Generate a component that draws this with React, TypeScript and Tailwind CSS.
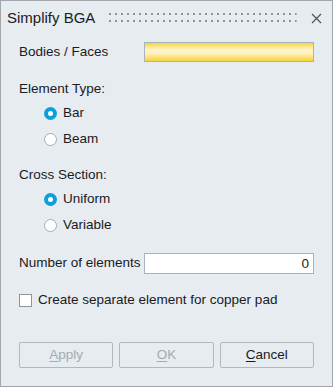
import React from 'react';

function Radio({ label, checked }: { label: string; checked?: boolean }) {
  return (
    <div className="flex items-center h-[26px] pl-[25px]">
      {checked ? (
        <span className="w-[13px] h-[13px] rounded-full bg-[#0aa0e0] flex items-center justify-center">
          <span className="w-[5px] h-[5px] rounded-full bg-white" />
        </span>
      ) : (
        <span className="w-[13px] h-[13px] rounded-full bg-white border border-[#a8acb0]" />
      )}
      <span className="ml-[6px]">{label}</span>
    </div>
  );
}

function Button({ children, disabled }: { children: React.ReactNode; disabled?: boolean }) {
  return (
    <button
      className={
        'flex-1 h-[26px] rounded-[2px] border border-[#b4b8bc] bg-[#e6ecf0] ' +
        (disabled ? 'text-[#a3abb3]' : 'text-[#1a1a24]')
      }
    >
      {children}
    </button>
  );
}

export default function App() {
  return (
    <div
      className="w-[333px] h-[387px] bg-[#e6ecf0] border border-[#a2a6aa] text-[13.5px] text-[#1a1a24] flex flex-col"
      style={{ fontFamily: '"Liberation Sans", Arial, sans-serif' }}
    >
      {/* Title bar */}
      <div className="flex items-center h-[34px] pl-[6px] pr-[8px]">
        <span className="text-[15px]">Simplify BGA</span>
        <svg className="flex-1 mx-[14px] h-[10px]" height="10">
          <defs>
            <pattern id="grip" width="6" height="7" patternUnits="userSpaceOnUse">
              <rect x="0" y="0" width="2" height="2" fill="#8c9298" />
            </pattern>
          </defs>
          <rect x="0" y="0" width="100%" height="9" fill="url(#grip)" />
        </svg>
        <svg width="11" height="11" viewBox="0 0 11 11" className="mr-[2px]">
          <path d="M1 1 L10 10 M10 1 L1 10" stroke="#50565c" strokeWidth="1.3" />
        </svg>
      </div>

      <div className="flex flex-col px-[18px]">
        <div className="flex items-center h-[20px] mt-[7px]">
          <span className="w-[125px]">Bodies / Faces</span>
          <div className="flex-1 h-[20px] border border-[#a9b1bb] bg-[linear-gradient(to_bottom,#f6d53a,#fff3c6_35%,#fff3c6_55%,#f7d23a)]" />
        </div>

        <div className="mt-[16px] h-[22px] flex items-center">Element Type:</div>
        <Radio label="Bar" checked />
        <Radio label="Beam" />

        <div className="mt-[12px] h-[22px] flex items-center">Cross Section:</div>
        <Radio label="Uniform" checked />
        <Radio label="Variable" />

        <div className="flex items-center h-[21px] mt-[15px]">
          <span className="w-[125px]">Number of elements</span>
          <div className="flex-1 h-[21px] border border-[#a9b1bb] bg-white text-right pr-[4px] leading-[19px]">0</div>
        </div>

        <div className="flex items-center mt-[16px] h-[20px]">
          <span className="w-[13px] h-[13px] bg-white border border-[#8e9499]" />
          <span className="ml-[6px]">Create separate element for copper pad</span>
        </div>
      </div>

      <div className="flex-1" />
      <div className="flex gap-[6px] px-[18px] pb-[18px]">
        <Button disabled><span className="underline underline-offset-2">A</span>pply</Button>
        <Button disabled><span className="underline underline-offset-2">O</span>K</Button>
        <Button><span className="underline underline-offset-2">C</span>ancel</Button>
      </div>
    </div>
  );
}
